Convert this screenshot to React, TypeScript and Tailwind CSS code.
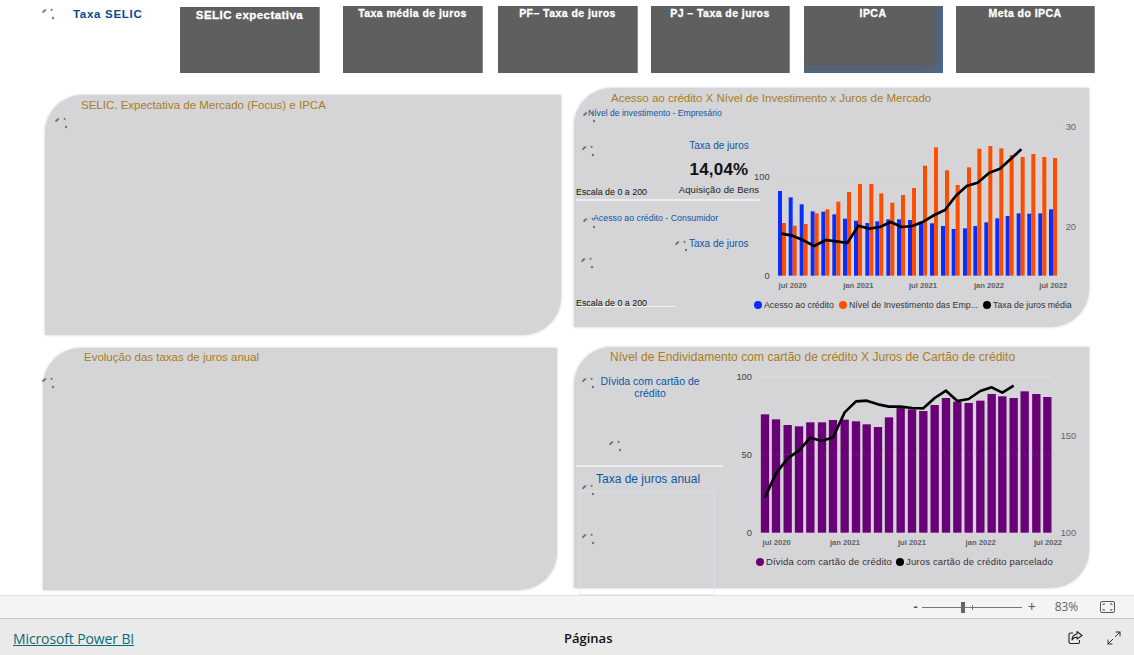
import React from "react";
import { Maximize2 } from "lucide-react";

const font = { fontFamily: '"Liberation Sans", Arial, sans-serif' };

function Spinner({ className = "" }: { className?: string }) {
  return (
    <svg className={`absolute ${className}`} width="14" height="13" viewBox="0 0 14 13">
      <circle cx="1.2" cy="5" r="1" fill="#666" />
      <circle cx="2.6" cy="3.6" r="1.1" fill="#555" />
      <circle cx="4" cy="2.8" r="0.8" fill="#999" />
      <circle cx="9.6" cy="2.8" r="1.1" fill="#777" />
      <circle cx="11" cy="11" r="1.2" fill="#777" />
    </svg>
  );
}

const blueX = [105, 137, 170, 203, 235, 268, 300, 333, 367, 397, 430, 462, 495, 528, 561, 594, 626, 660, 691, 724, 757, 788, 821, 853, 886, 918];
const blueTop = [243, 262, 283, 304, 305, 313, 326, 332, 339, 334, 328, 328, 330, 335, 340, 348, 357, 355, 348, 337, 325, 318, 310, 311, 310, 298];
const orangeTop = [339, 347, 342, 310, 298, 275, 246, 222, 222, 250, 278, 255, 234, 167, 112, 181, 225, 172, 116, 108, 115, 135, 141, 132, 141, 144];
const line1 = "110,371 142,377 175,391 208,408 242,390 275,394 307,399 340,347 373,356 405,351 437,336 470,351 502,348 535,335 568,315 600,300 632,258 665,228 698,218 733,188 765,176 797,147 829,118";

const purpleX = [105, 138, 173, 207, 241, 276, 309, 344, 378, 410, 444, 477, 512, 546, 580, 614, 648, 682, 716, 751, 785, 817, 851, 884, 919, 952];
const purpleTop = [163, 178, 195, 199, 187, 187, 180, 179, 184, 193, 201, 172, 142, 148, 153, 135, 114, 125, 129, 122, 102, 109, 114, 94, 102, 111];
const line2 = "105,412 138,340 173,295 207,272 241,233 276,243 309,232 344,157 378,124 410,122 444,133 477,140 512,140 546,144 580,145 614,114 648,92 682,123 716,117 751,93 785,82 817,98 851,77";

function ChartOne() {
  return (
    <svg width="335" height="187" viewBox="0 0 1005 561" className="mt-[3px] -ml-[15px] shrink-0 overflow-visible" style={font}>
      <line x1="100" x2="935" y1="200" y2="200" stroke="#c8c8cb" strokeWidth="3" strokeDasharray="3 9" />
      <line x1="935" x2="952" y1="49" y2="49" stroke="#c8c8cb" strokeWidth="3" strokeDasharray="3 9" />
      {blueX.map((x, i) => (
        <g key={x}>
          <rect x={x - 6} y={blueTop[i]} width="12" height={497 - blueTop[i]} fill="#0a2dfc" />
          <rect x={x + 6} y={orangeTop[i]} width="12" height={497 - orangeTop[i]} fill="#ff4d00" />
        </g>
      ))}
      <polyline points={line1} fill="none" stroke="#000" strokeWidth="8" strokeLinejoin="round" />
      <g fontSize="28" fill="#444">
        <text x="74" y="209" textAnchor="end">100</text>
        <text x="74" y="507" textAnchor="end">0</text>
        <text x="962" y="59" fill="#666">30</text>
        <text x="962" y="360" fill="#666">20</text>
      </g>
      <g fontSize="23" fill="#444" textAnchor="middle" fontWeight="700" opacity="0.8">
        <text x="143" y="535">jul 2020</text>
        <text x="340" y="535">jan 2021</text>
        <text x="534" y="535">jul 2021</text>
        <text x="732" y="535">jan 2022</text>
        <text x="925" y="535">jul 2022</text>
      </g>
    </svg>
  );
}

function ChartTwo() {
  return (
    <svg width="365" height="183" viewBox="0 15 1095 549" className="shrink-0 overflow-visible" style={font}>
      <line x1="90" x2="960" y1="50" y2="50" stroke="#f2f2f2" strokeWidth="3" strokeDasharray="3 9" />
      {purpleX.map((x, i) => (
        <rect key={x} x={x - 12.5} y={purpleTop[i]} width="25" height={518 - purpleTop[i]} fill="#6a0078" />
      ))}
      <line x1="90" x2="960" y1="284" y2="284" stroke="#e2e2e2" strokeWidth="2" strokeDasharray="3 9" opacity="0.35" />
      <polyline points={line2} fill="none" stroke="#000" strokeWidth="8" strokeLinejoin="round" />
      <g fontSize="28" fill="#444">
        <text x="66" y="60" textAnchor="end">100</text>
        <text x="66" y="293" textAnchor="end">50</text>
        <text x="66" y="527" textAnchor="end">0</text>
        <text x="992" y="236" fill="#666">150</text>
        <text x="992" y="527" fill="#666">100</text>
      </g>
      <g fontSize="23" fill="#444" textAnchor="middle" fontWeight="700" opacity="0.8">
        <text x="140" y="555">jul 2020</text>
        <text x="345" y="555">jan 2021</text>
        <text x="546" y="555">jul 2021</text>
        <text x="752" y="555">jan 2022</text>
        <text x="954" y="555">jul 2022</text>
      </g>
    </svg>
  );
}

function Tile({ label, className = "", text = "text-[10.5px]" }: { label: string; className?: string; text?: string }) {
  return (
    <div className={`bg-[#5f5f5f] border-r border-[#8a8a8a] flex justify-center ${className}`}>
      <span className={`text-white font-bold tracking-[0.45px] leading-none [-webkit-text-stroke:0.3px_white] ${text}`}>{label}</span>
    </div>
  );
}

function Legend({ color, label, className = "" }: { color: string; label: string; className?: string }) {
  return (
    <span className={`flex items-center gap-[2px] ${className}`}>
      <span className={`w-2 h-2 rounded-full ${color}`} />
      <span>{label}</span>
    </span>
  );
}

export default function App() {
  return (
    <div className="w-[1134px] h-[655px] bg-white overflow-hidden flex flex-col" style={font}>
      <div className="h-[595px] shrink-0 relative">
        {/* tiles */}
        <div className="flex h-[73px] items-end">
          <div className="w-[180px] h-full relative">
            <Spinner className="left-[42px] top-[7px]" />
            <span className="absolute left-[73px] top-[6px] text-[11.5px] font-bold tracking-[0.7px] text-[#004b91]">Taxa SELIC</span>
          </div>
          <Tile label="SELIC expectativa" text="text-[11.5px]" className="w-[140px] h-[66px] pt-[3px]" />
          <Tile label="Taxa média de juros" className="w-[140px] h-[67px] ml-[23px] pt-[2px]" />
          <Tile label="PF– Taxa de juros" className="w-[140px] h-[67px] ml-[15px] pt-[2px]" />
          <Tile label="PJ – Taxa de juros" className="w-[139px] h-[67px] ml-[13px] pt-[2px]" />
          <Tile label="IPCA" className="w-[139px] h-[67px] ml-[14px] pt-[2px] border-r-[#4a6a90] shadow-[inset_-8px_-8px_10px_-4px_#4a6a90]" />
          <Tile label="Meta do IPCA" className="w-[139px] h-[67px] ml-[13px] pt-[2px]" />
        </div>

        {/* canvas */}
        <div className="flex pl-[43px]">
          {/* left column */}
          <div className="w-[518px] shrink-0 flex flex-col">
            <section className="relative ml-[2px] mt-[22px] w-[516px] h-[240px] bg-[#d5d5d8] rounded-tl-[38px] rounded-br-[38px] shadow-[0_0_3px_#c8c8c8] pl-[36px] pt-[3px]">
              <h2 className="text-[11.5px] leading-[15px] text-[#a97d22] font-normal">SELIC. Expectativa de Mercado (Focus) e IPCA</h2>
              <Spinner className="left-[10px] top-[21px]" />
            </section>
            <section className="relative mt-[13px] w-[514px] h-[242px] bg-[#d5d5d8] rounded-tl-[38px] rounded-br-[38px] shadow-[0_0_3px_#c8c8c8] pl-[41px] pt-[2px]">
              <h2 className="text-[11.5px] leading-[15px] text-[#a97d22] font-normal">Evolução das taxas de juros anual</h2>
              <Spinner className="left-[-1px] top-[28px]" />
            </section>
          </div>

          {/* right column */}
          <div className="w-[515px] ml-[13px] shrink-0 flex flex-col">
            <section className="relative mt-[15px] h-[239px] bg-[#d5d5d8] rounded-tl-[38px] rounded-br-[38px] shadow-[0_0_3px_#c8c8c8]">
              <h2 className="h-[19px] pl-[37px] pt-[3px] text-[11.5px] leading-[15px] text-[#a97d22] font-normal">Acesso ao crédito X Nível de Investimento x Juros de Mercado</h2>
              <div className="flex">
                <div className="relative z-10 w-[186px] shrink-0 flex flex-col pl-[2px] text-[#0a55a5]">
                  <div className="h-[94px] border-b-2 border-[#ececec] flex flex-col">
                    <span className="pl-[12px] text-[8.6px] leading-[12px] whitespace-nowrap">Nível de investimento - Empresário</span>
                    <div className="flex-1 flex justify-between">
                      <span className="self-end text-[8.9px] leading-[12px] text-[#111] mb-[1px]">Escala de 0 a 200</span>
                      <div className="w-[82px] flex flex-col items-center pt-[21px]">
                        <span className="text-[10px] leading-[12px] whitespace-nowrap">Taxa de juros</span>
                        <span className="mt-[8px] text-[17px] leading-[20px] font-bold tracking-[0.2px] text-[#111]">14,04%</span>
                        <span className="mt-[4px] text-[9.5px] leading-[12px] text-[#222] whitespace-nowrap tracking-[0.1px]">Aquisição de Bens</span>
                      </div>
                    </div>
                  </div>
                  <div className="h-[106px] w-[100px] border-b border-[#f2f2f2] flex flex-col">
                    <span className="pl-[17px] pt-[11px] text-[8.8px] leading-[12px] whitespace-nowrap">Acesso ao crédito - Consumidor</span>
                    <span className="pl-[113px] pt-[14px] text-[10px] leading-[12px] whitespace-nowrap">Taxa de juros</span>
                    <span className="mt-auto mb-[-3px] text-[8.9px] leading-[12px] text-[#111] whitespace-nowrap">Escala de 0 a 200</span>
                  </div>
                  <Spinner className="left-[9px] top-[3px]" />
                  <Spinner className="left-[8px] top-[37px]" />
                  <Spinner className="left-[9px] top-[109px]" />
                  <Spinner className="left-[101px] top-[132px]" />
                  <Spinner className="left-[7px] top-[149px]" />
                </div>
                <div className="flex flex-col">
                  <ChartOne />
                  <div className="flex gap-[5px] -ml-[6px] mt-[2px] text-[8.8px] leading-[12px] text-[#333] whitespace-nowrap">
                    <Legend color="bg-[#0a2dfc]" label="Acesso ao crédito" />
                    <Legend color="bg-[#ff4d00]" label="Nível de Investimento das Emp..." />
                    <Legend color="bg-black" label="Taxa de juros média" />
                  </div>
                </div>
              </div>
            </section>

            <section className="relative mt-[20px] h-[241px] bg-[#d5d5d8] rounded-tl-[38px] rounded-br-[38px] shadow-[0_0_3px_#c8c8c8]">
              <h2 className="h-[18px] pl-[36px] pt-[3px] text-[12px] leading-[15px] tracking-[0.05px] text-[#a97d22] font-normal whitespace-nowrap">Nível de Endividamento com cartão de crédito X Juros de Cartão de crédito</h2>
              <div className="flex">
                <div className="relative w-[156px] shrink-0 flex flex-col pl-[2px] text-[#0a55a5]">
                  <div className="h-[102px] w-[147px] border-b-2 border-[#ececec] pt-[10px] pl-[21px] pr-[20px] text-center text-[10.5px] leading-[12px]">
                    Dívida com cartão de crédito
                  </div>
                  <span className="pt-[5px] pl-[20px] text-[12px] leading-[15px] whitespace-nowrap">Taxa de juros anual</span>
                  <div className="absolute left-[5px] top-[126px] w-[136px] h-[104px] border border-[#dce4ee]/60" />
                  <Spinner className="left-[8px] top-[11px]" />
                  <Spinner className="left-[35px] top-[74px]" />
                  <Spinner className="left-[8px] top-[118px]" />
                  <Spinner className="left-[8px] top-[167px]" />
                </div>
                <div className="flex flex-col">
                  <ChartTwo />
                  <div className="flex gap-[4px] ml-[26px] mt-[8px] text-[9.5px] leading-[12px] text-[#333] whitespace-nowrap tracking-[0.18px]">
                    <Legend color="bg-[#6a0078]" label="Dívida com cartão de crédito" />
                    <Legend color="bg-black" label="Juros cartão de crédito parcelado" />
                  </div>
                </div>
              </div>
            </section>
          </div>
        </div>
      </div>

      {/* status bar */}
      <div className="h-[24px] shrink-0 bg-[#f4f4f4] border-y border-t-[#dfdfdf] border-b-[#c6c6c6] flex items-center justify-end pr-[19px] text-[#666]" style={{ fontFamily: '"Open Sans", sans-serif' }}>
        <span className="text-[13px] leading-none font-bold text-[#555] mr-[4px] -mt-[2px]">-</span>
        <div className="relative w-[100px] h-px bg-[#777]">
          <span className="absolute left-[39px] -top-[5px] w-[4px] h-[11px] bg-[#666]" />
          <span className="absolute left-[50px] -top-[2px] w-px h-[5px] bg-[#777]" />
        </div>
        <span className="text-[14px] leading-none ml-[6px] text-[#555]">+</span>
        <span className="text-[12px] ml-[19px] tracking-[-0.15px]">83%</span>
        <svg className="ml-[22px]" width="15" height="12" viewBox="0 0 15 12" fill="none" stroke="#555">
          <rect x="0.5" y="0.5" width="14" height="11" rx="1.5" />
          <path d="M3 4V3H5M10 3H12V4M3 8V9H5M10 9H12V8" />
        </svg>
      </div>

      {/* footer */}
      <div className="flex-1 bg-[#eaeaea] flex items-center pt-[3px]" style={{ fontFamily: '"Open Sans", sans-serif' }}>
        <a className="ml-[13px] w-[120px] text-[14px] leading-none underline text-[#0e6b74] whitespace-nowrap tracking-[-0.12px]">Microsoft Power BI</a>
        <span className="ml-[431px] w-[50px] text-[13px] leading-none font-semibold text-[#111] whitespace-nowrap">Páginas</span>
        <svg className="ml-[454px] -mt-[2px]" width="15" height="15" viewBox="0 0 15 15" fill="none" stroke="#222" strokeWidth="1.1">
          <path d="M5 3H2.5A1.5 1.5 0 0 0 1 4.5V12a1.5 1.5 0 0 0 1.5 1.5H10a1.5 1.5 0 0 0 1.5-1.5V10" />
          <path d="M9 1.5L14 5.5L9 9V7C6.5 7 5 8 4 10C4 6.5 6 4.5 9 4Z" strokeLinejoin="round" />
        </svg>
        <Maximize2 className="ml-[23px] -mt-[2px] text-[#222]" size={16} strokeWidth={1.4} />
      </div>
    </div>
  );
}
